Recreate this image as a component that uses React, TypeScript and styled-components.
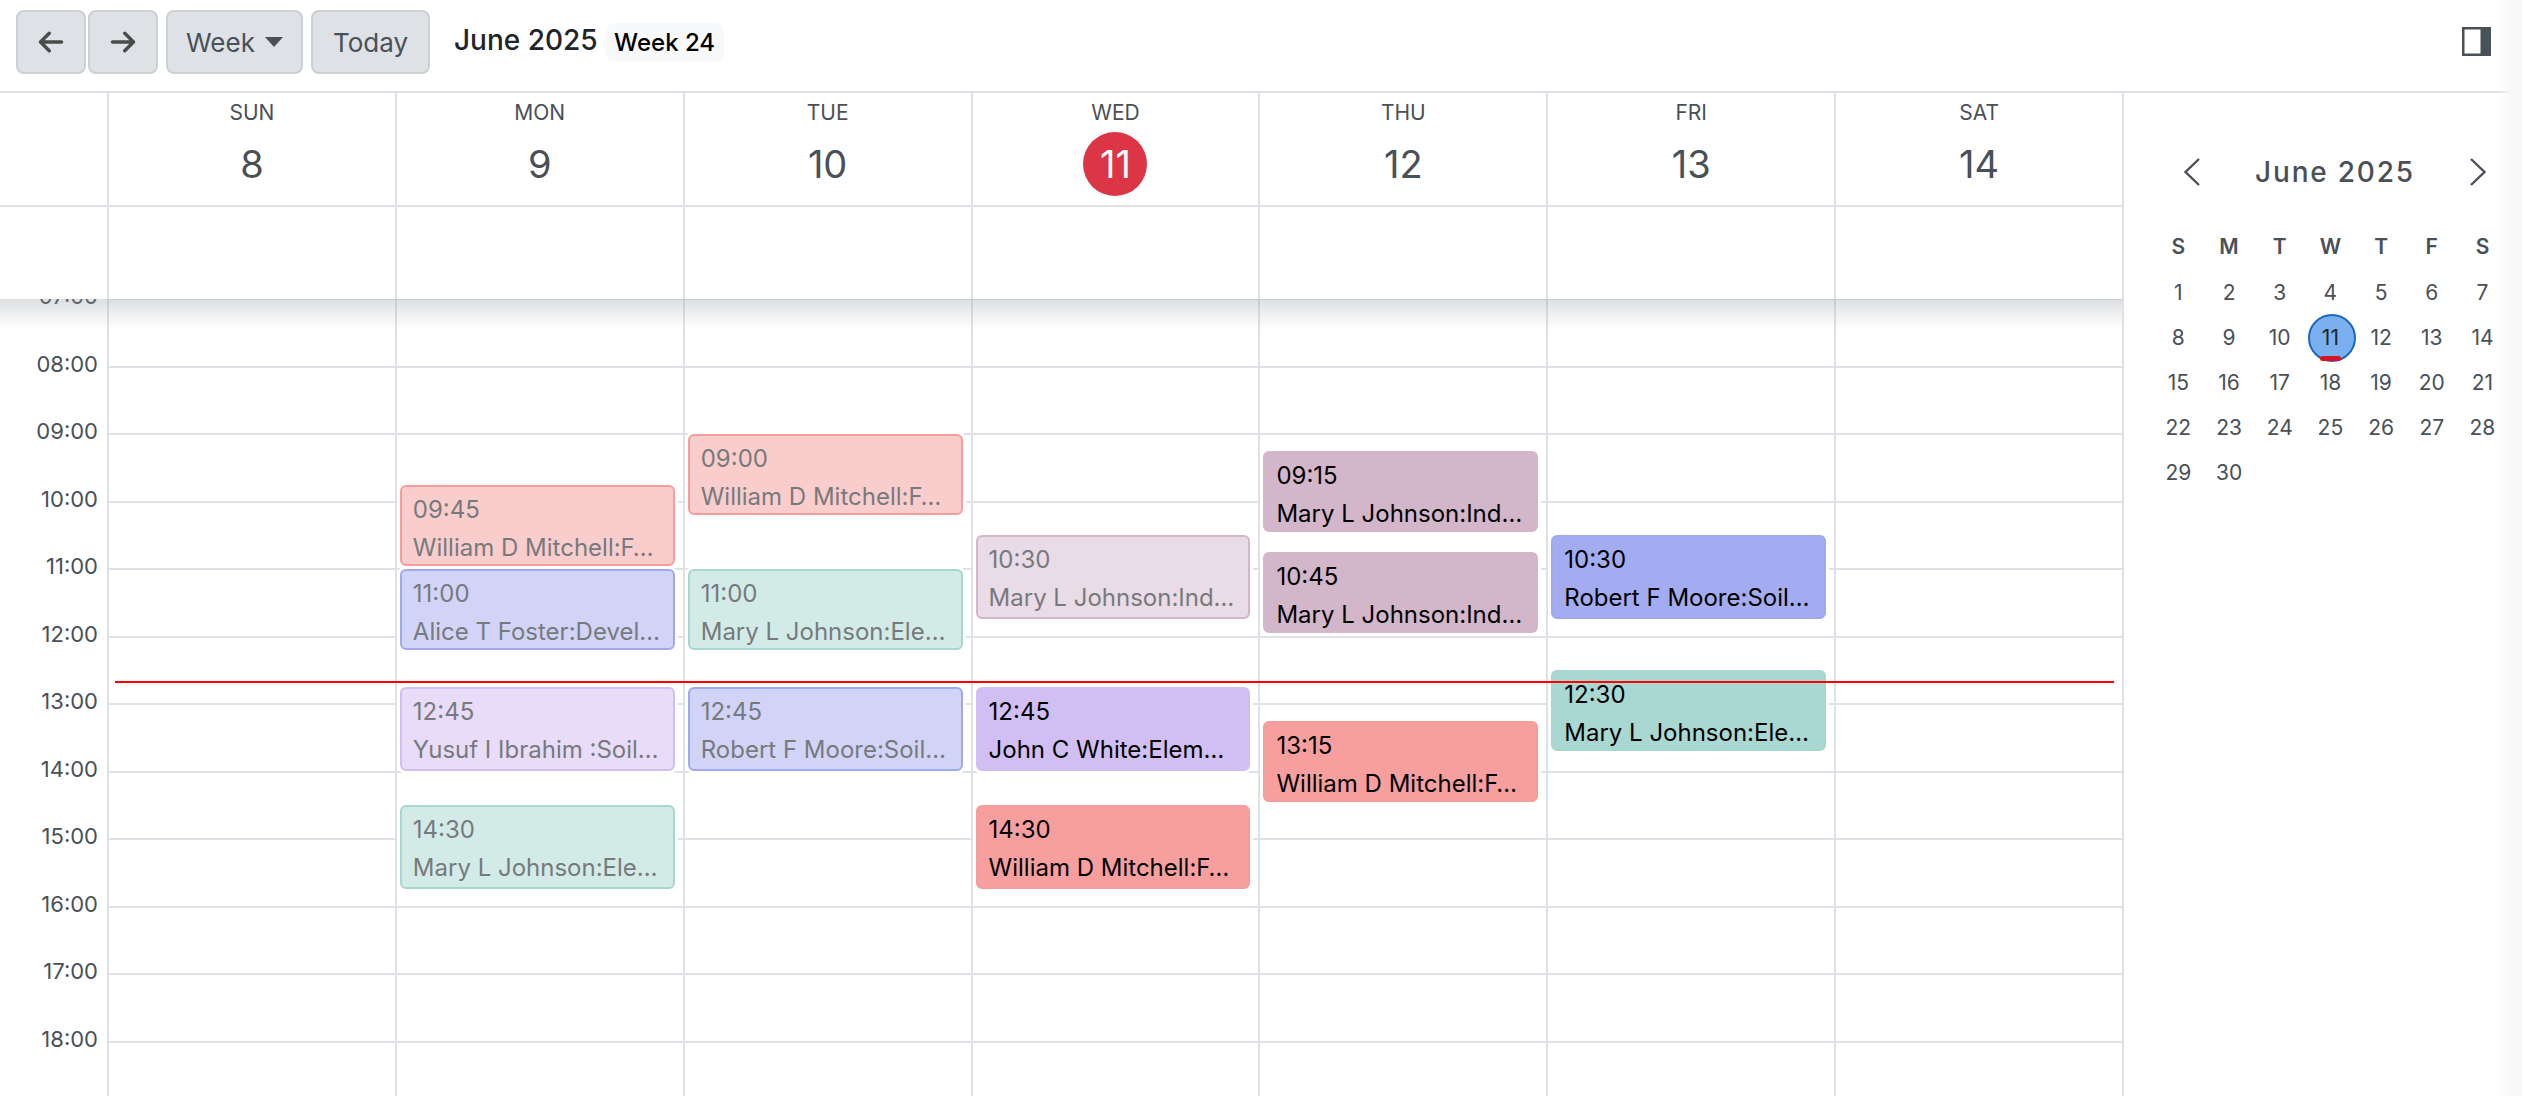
import React from 'react';
import styled, { createGlobalStyle } from 'styled-components';

const HOUR = 67.5;
const FONT = '"Inter", "Noto Sans", "Liberation Sans", sans-serif';

const palette = {
  red: { bg: '#f79f9e', soft: '#facdcd', line: '#f99b9b' },
  blue: { bg: '#a3acf0', soft: '#d1d4f7', line: '#a0a9ef' },
  teal: { bg: '#a9d7d2', soft: '#d3ebe7', line: '#a8d7d1' },
  purple: { bg: '#d1bff3', soft: '#e8dcf9', line: '#d1bff3' },
  mauve: { bg: '#d3b6ca', soft: '#e9dce6', line: '#d3b6ca' },
};

type Tone = keyof typeof palette;

interface CalEvent {
  time: string;
  title: string;
  tone: Tone;
  past?: boolean;
  mins?: number;
}

const days: { name: string; num: number; today?: boolean; events: CalEvent[] }[] = [
  { name: 'SUN', num: 8, events: [] },
  {
    name: 'MON',
    num: 9,
    events: [
      { time: '09:45', title: 'William D Mitchell:F…', tone: 'red', past: true },
      { time: '11:00', title: 'Alice T Foster:Devel…', tone: 'blue', past: true },
      { time: '12:45', title: 'Yusuf I Ibrahim :Soil…', tone: 'purple', past: true, mins: 75 },
      { time: '14:30', title: 'Mary L Johnson:Ele…', tone: 'teal', past: true, mins: 75 },
    ],
  },
  {
    name: 'TUE',
    num: 10,
    events: [
      { time: '09:00', title: 'William D Mitchell:F…', tone: 'red', past: true },
      { time: '11:00', title: 'Mary L Johnson:Ele…', tone: 'teal', past: true },
      { time: '12:45', title: 'Robert F Moore:Soil…', tone: 'blue', past: true, mins: 75 },
    ],
  },
  {
    name: 'WED',
    num: 11,
    today: true,
    events: [
      { time: '10:30', title: 'Mary L Johnson:Ind…', tone: 'mauve', past: true, mins: 75 },
      { time: '12:45', title: 'John C White:Elem…', tone: 'purple', mins: 75 },
      { time: '14:30', title: 'William D Mitchell:F…', tone: 'red', mins: 75 },
    ],
  },
  {
    name: 'THU',
    num: 12,
    events: [
      { time: '09:15', title: 'Mary L Johnson:Ind…', tone: 'mauve' },
      { time: '10:45', title: 'Mary L Johnson:Ind…', tone: 'mauve' },
      { time: '13:15', title: 'William D Mitchell:F…', tone: 'red' },
    ],
  },
  {
    name: 'FRI',
    num: 13,
    events: [
      { time: '10:30', title: 'Robert F Moore:Soil…', tone: 'blue', mins: 75 },
      { time: '12:30', title: 'Mary L Johnson:Ele…', tone: 'teal' },
    ],
  },
  { name: 'SAT', num: 14, events: [] },
];

const hours = Array.from({ length: 14 }, (_, i) => i + 7);
const weekLetters = ['S', 'M', 'T', 'W', 'T', 'F', 'S'];
const monthDays = Array.from({ length: 30 }, (_, i) => i + 1);

// hours since the 07:00 line at the top of the grid
const offsetOf = (time: string) => {
  const [h, m] = time.split(':').map(Number);
  return ((h - 7) * 60 + m) / 60;
};

const GlobalStyle = createGlobalStyle`
  html, body {
    margin: 0;
    padding: 0;
    background: #fff;
    overflow: hidden;
  }
  * {
    box-sizing: border-box;
  }
`;

const Page = styled.div`
  position: relative;
  width: 2522px;
  height: 1096px;
  display: flex;
  flex-direction: column;
  font-family: ${FONT};
  color: #495057;
  background: #fff;
  overflow: hidden;

  &::after {
    content: '';
    position: absolute;
    top: 0;
    right: 0;
    bottom: 0;
    width: 24px;
    background: linear-gradient(to right, rgba(248, 248, 248, 0), #f8f8f8 60%);
    pointer-events: none;
  }
`;

const Toolbar = styled.header`
  flex: 0 0 93px;
  display: flex;
  align-items: flex-start;
  padding: 10px 31px 0 16px;
  border-bottom: 2px solid #dee2e6;
`;

const ToolButton = styled.button<{ $width: number; $gap?: number }>`
  flex: 0 0 ${(p) => p.$width}px;
  height: 64px;
  margin-right: ${(p) => p.$gap ?? 0}px;
  display: flex;
  align-items: center;
  justify-content: center;
  gap: 10px;
  padding: 0;
  background: #dee2e6;
  border: 2px solid #cdd0d3;
  border-radius: 8px;
  color: #495057;
  font-family: ${FONT};
  font-size: 26px;
`;

const Caret = styled.span`
  width: 0;
  height: 0;
  border-left: 9px solid transparent;
  border-right: 9px solid transparent;
  border-top: 10px solid #495057;
`;

const MonthTitle = styled.div`
  margin: 5px 0 0 24px;
  font-size: 28px;
  line-height: 50px;
  font-weight: 500;
  color: #212529;
`;

const WeekBadge = styled.div`
  margin: 13px 0 0 8px;
  width: 118px;
  height: 39px;
  display: flex;
  align-items: center;
  justify-content: center;
  border-radius: 8px;
  background: #f8f9fa;
  color: #000;
  font-size: 24px;
  font-weight: 500;
`;

const PanelToggle = styled.div`
  margin: 17px 0 0 auto;
  display: flex;
`;

const Main = styled.div`
  flex: 1;
  display: flex;
  min-height: 0;
`;

const Calendar = styled.section`
  position: relative;
  flex: 0 0 2122px;
  display: flex;
  flex-direction: column;
  min-width: 0;
`;

const gridColumns = '107px repeat(7, 1fr)';

const DayHeader = styled.div`
  flex: 0 0 114px;
  display: grid;
  grid-template-columns: ${gridColumns};
  border-bottom: 2px solid #dee2e6;
`;

const DayHead = styled.div`
  border-left: 2px solid #dee2e6;
  display: flex;
  flex-direction: column;
  align-items: center;
  padding-top: 7px;
`;

const DayName = styled.div`
  font-size: 21px;
  line-height: 26px;
`;

const DayNum = styled.div<{ $today?: boolean }>`
  margin-top: 6px;
  width: 64px;
  height: 64px;
  display: flex;
  align-items: center;
  justify-content: center;
  border-radius: 50%;
  font-size: 38px;
  background: ${(p) => (p.$today ? '#dc3545' : 'transparent')};
  color: ${(p) => (p.$today ? '#fff' : '#495057')};
`;

const AllDayRow = styled.div`
  position: relative;
  z-index: 3;
  flex: 0 0 92px;
  display: grid;
  grid-template-columns: ${gridColumns};
  background: #fff;

  &::after {
    content: '';
    position: absolute;
    top: 100%;
    left: 0;
    right: 0;
    height: 30px;
    background: linear-gradient(to bottom, rgba(150, 155, 160, 0.32), rgba(160, 165, 170, 0));
    pointer-events: none;
  }
`;

const AllDayCell = styled.div`
  border-left: 2px solid #dee2e6;
`;

const Body = styled.div`
  position: relative;
  flex: 1;
  min-height: 0;
  margin-top: -1px;
  display: grid;
  grid-template-columns: ${gridColumns};
  overflow: hidden;
`;

const Gutter = styled.div`
  display: flex;
  flex-direction: column;
`;

const HourLabel = styled.div`
  flex: 0 0 ${HOUR}px;
  padding-right: 9px;
  text-align: right;
  font-size: 22px;
  line-height: 26px;
  transform: translateY(-15px);
`;

const DayColumn = styled.div`
  position: relative;
  border-left: 2px solid #dee2e6;
  display: flex;
  flex-direction: column;
`;

const HourSlot = styled.div`
  flex: 0 0 ${HOUR}px;
  border-top: 2px solid #dee2e6;
`;

const Event = styled.div<{ $tone: Tone; $past?: boolean; $top: number; $mins: number }>`
  position: absolute;
  top: ${(p) => p.$top * HOUR + 1}px;
  height: ${(p) => (p.$mins / 60) * HOUR - 1}px;
  left: 3px;
  right: 8px;
  padding: 4px 11px 0;
  border: 2px solid ${(p) => palette[p.$tone].line};
  border-radius: 6px;
  background: ${(p) => (p.$past ? palette[p.$tone].soft : palette[p.$tone].bg)};
  color: ${(p) => (p.$past ? '#777a7d' : '#000')};
  box-shadow: 0 0 0 3px #fff;
  font-size: 24px;
  line-height: 38px;
  white-space: nowrap;
  overflow: hidden;
`;

const NowLine = styled.div`
  position: absolute;
  top: 383px;
  left: 115px;
  right: 8px;
  height: 2px;
  background: #f00;
`;

const SidePanel = styled.aside`
  flex: 1;
  border-left: 2px solid #dee2e6;
  padding: 60px 0 0 29px;
`;

const MiniHeader = styled.div`
  width: 356px;
  height: 38px;
  display: flex;
  align-items: center;
  justify-content: space-between;
  padding-left: 30px;
  padding-right: 22px;
`;

const MiniTitle = styled.div`
  font-size: 28px;
  font-weight: 500;
  letter-spacing: 1.8px;
`;

const MiniGrid = styled.div`
  margin-top: 34px;
  width: 356px;
  display: grid;
  grid-template-columns: repeat(7, 50.7px);
  grid-auto-rows: 45px;
  font-size: 21px;
`;

const MiniHead = styled.div`
  display: flex;
  align-items: center;
  justify-content: center;
  font-weight: 600;
  margin-bottom: 2px;
`;

const MiniDay = styled.div<{ $selected?: boolean }>`
  position: relative;
  z-index: 0;
  display: flex;
  align-items: center;
  justify-content: center;
  color: ${(p) => (p.$selected ? '#212529' : '#495057')};

  ${(p) =>
    p.$selected &&
    `
    &::before {
      content: '';
      position: absolute;
      z-index: -1;
      left: 3px;
      top: -1px;
      width: 44px;
      height: 44px;
      border-radius: 50%;
      background: #7ab0ef;
      border: 2px solid #1a68c4;
    }
    &::after {
      content: '';
      position: absolute;
      left: 15px;
      bottom: -1px;
      width: 21px;
      height: 5px;
      border-radius: 3px;
      background: #d8151f;
    }
  `}
`;

const ArrowLeft = () => (
  <svg width="28" height="28" viewBox="0 0 448 512" fill="#4b4b4b">
    <path d="M9.4 233.4c-12.5 12.5-12.5 32.8 0 45.3l160 160c12.5 12.5 32.8 12.5 45.3 0s12.5-32.8 0-45.3L109.200 288H416c17.700 0 32-14.300 32-32s-14.300-32-32-32H109.300l105.300-105.400c12.500-12.500 12.500-32.800 0-45.300s-32.800-12.500-45.300 0l-160 160z" />
  </svg>
);

const ArrowRight = () => (
  <svg width="28" height="28" viewBox="0 0 448 512" fill="#4b4b4b">
    <path d="M438.600 278.600c12.500-12.500 12.500-32.800 0-45.300l-160-160c-12.500-12.500-32.800-12.500-45.300 0s-12.500 32.800 0 45.300L338.800 224H32c-17.700 0-32 14.300-32 32s14.300 32 32 32h306.700L233.400 393.400c-12.500 12.500-12.500 32.800 0 45.300s32.800 12.500 45.300 0l160-160z" />
  </svg>
);

const Chevron = ({ dir }: { dir: 'left' | 'right' }) => (
  <svg width="18" height="30" viewBox="0 0 18 30" fill="none" stroke="#495057" strokeWidth="2.4">
    <path d={dir === 'left' ? 'M16 2 L2.500 15 L16 28' : 'M2 2 L15.500 15 L2 28'} />
  </svg>
);

const SidebarIcon = () => (
  <svg width="29" height="29" viewBox="0 0 29 29">
    <rect x="1.250" y="1.250" width="26.500" height="26.500" fill="#fff" stroke="#495057" strokeWidth="2.500" />
    <rect x="18.500" y="0" width="10.500" height="29" fill="#495057" />
  </svg>
);

export default function App() {
  return (
    <Page>
      <GlobalStyle />
      <Toolbar>
        <ToolButton $width={70} $gap={2}>
          <ArrowLeft />
        </ToolButton>
        <ToolButton $width={70} $gap={8}>
          <ArrowRight />
        </ToolButton>
        <ToolButton $width={137} $gap={8}>
          Week <Caret />
        </ToolButton>
        <ToolButton $width={119}>Today</ToolButton>
        <MonthTitle>June 2025</MonthTitle>
        <WeekBadge>Week 24</WeekBadge>
        <PanelToggle>
          <SidebarIcon />
        </PanelToggle>
      </Toolbar>
      <Main>
        <Calendar>
          <DayHeader>
            <div />
            {days.map((d) => (
              <DayHead key={d.name}>
                <DayName>{d.name}</DayName>
                <DayNum $today={d.today}>{d.num}</DayNum>
              </DayHead>
            ))}
          </DayHeader>
          <AllDayRow>
            <div />
            {days.map((d) => (
              <AllDayCell key={d.name} />
            ))}
          </AllDayRow>
          <Body>
            <Gutter>
              {hours.map((h) => (
                <HourLabel key={h}>{String(h).padStart(2, '0')}:00</HourLabel>
              ))}
            </Gutter>
            {days.map((d) => (
              <DayColumn key={d.name}>
                {hours.map((h) => (
                  <HourSlot key={h} />
                ))}
                {d.events.map((e) => (
                  <Event
                    key={e.time}
                    $tone={e.tone}
                    $past={e.past}
                    $top={offsetOf(e.time)}
                    $mins={e.mins ?? 73}
                  >
                    <div>{e.time}</div>
                    <div>{e.title}</div>
                  </Event>
                ))}
              </DayColumn>
            ))}
            <NowLine />
          </Body>
        </Calendar>
        <SidePanel>
          <MiniHeader>
            <Chevron dir="left" />
            <MiniTitle>June 2025</MiniTitle>
            <Chevron dir="right" />
          </MiniHeader>
          <MiniGrid>
            {weekLetters.map((l, i) => (
              <MiniHead key={i}>{l}</MiniHead>
            ))}
            {monthDays.map((n) => (
              <MiniDay key={n} $selected={n === 11}>
                {n}
              </MiniDay>
            ))}
          </MiniGrid>
        </SidePanel>
      </Main>
    </Page>
  );
}
